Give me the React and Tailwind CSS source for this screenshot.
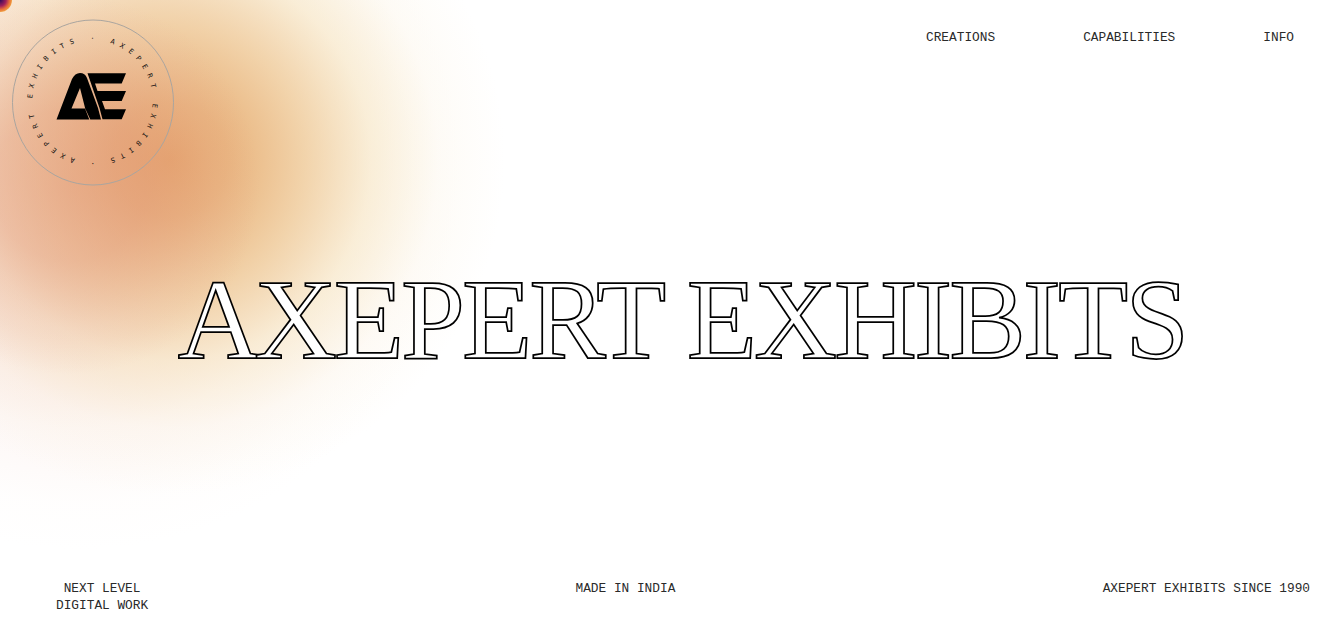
const mono = "font-['Liberation_Mono',monospace] text-[12.8px] leading-[17px] text-[#2a2a2a]";

function Logo() {
  return (
    <svg width="164" height="168" viewBox="0 0 164 168" className="block overflow-visible">
      <ellipse cx="81" cy="82.5" rx="80.5" ry="82.5" fill="none" stroke="#aaa59f" strokeWidth="1" />
      <defs>
        <path id="ring" d="M70.05 21.51 A60.2 60.2 0 0 1 90.95 140.09 A60.2 60.2 0 0 1 70.05 21.51" />
      </defs>
      <text fontFamily="'DejaVu Sans Mono', monospace" fontSize="7" fill="#111" letterSpacing="5.7">
        <textPath href="#ring" startOffset="8.4">· AXEPERT EXHIBITS · AXEPERT EXHIBITS</textPath>
      </text>
      <g transform="translate(-12 -20)">
        <path d="M56.5 119.5 L72 79 Q75 73 80 73 Q85 73 87 78 L98 108 L101 119.5 L90.3 119.5 L85.2 108.5 L80 88 L71.5 108.5 L85 108.5 L89.3 119.5 Z" fill="#000" />
        <path d="M87.5 73.3 L126 73.3 L121.7 83.5 L95 83.5 L97.5 91 L126 91 L121.7 101 L102 101 L105 109.3 L126 109.3 L121.7 119.3 L102.5 119.3 L99.5 108 Z" fill="#000" />
      </g>
    </svg>
  );
}

export default function App() {
  return (
    <div className="relative h-[641px] w-full overflow-hidden bg-white flex flex-col">
      <div className="absolute inset-0 bg-[radial-gradient(circle_190px_at_70px_185px,rgba(224,140,120,0.42)_0%,rgba(224,140,120,0.36)_40%,rgba(226,150,140,0.15)_75%,rgba(226,150,140,0)_100%),radial-gradient(circle_335px_at_170px_160px,rgba(230,170,110,1)_0%,rgba(232,178,120,0.93)_17%,rgba(238,200,145,0.72)_40%,rgba(245,225,180,0.48)_60%,rgba(250,238,215,0.22)_80%,rgba(255,255,255,0)_100%),radial-gradient(circle_380px_at_80px_170px,rgba(240,195,180,0.55)_0%,rgba(240,195,180,0.42)_45%,rgba(245,215,205,0.2)_68%,rgba(252,238,232,0.08)_88%,rgba(255,255,255,0)_100%)]" />
      <div className="absolute left-[-12px] top-[-12px] h-[24px] w-[24px] rounded-full bg-[radial-gradient(circle_closest-side,#2c0a5a_0%,#a0205a_50%,#e8703a_80%,#f0a040_100%)]" />
      <header className="relative flex justify-between items-start pl-[12px] pr-[42px] pt-[20px] h-[190px] shrink-0">
        <Logo />
        <nav className={`${mono} flex gap-[88px] pt-[9px]`}>
          <span>CREATIONS</span>
          <span>CAPABILITIES</span>
          <span>INFO</span>
        </nav>
      </header>
      <main className="relative flex-1 flex justify-center pl-[28px]">
        <h1 className="font-['Liberation_Serif',serif] text-[115px] leading-[130px] mt-[65px] text-white tracking-[-3.05px] [-webkit-text-stroke:1.75px_#000] whitespace-nowrap"><span className="tracking-[-7px]">A</span>XEPERT EXHIBITS</h1>
      </main>
      <footer className={`${mono} relative flex justify-between items-start pl-[56px] pr-[26px] pb-[27px]`}>
        <span className="text-center">NEXT LEVEL<br />DIGITAL WORK</span>
        <span>MADE IN INDIA</span>
        <span>AXEPERT EXHIBITS SINCE 1990</span>
      </footer>
    </div>
  );
}
